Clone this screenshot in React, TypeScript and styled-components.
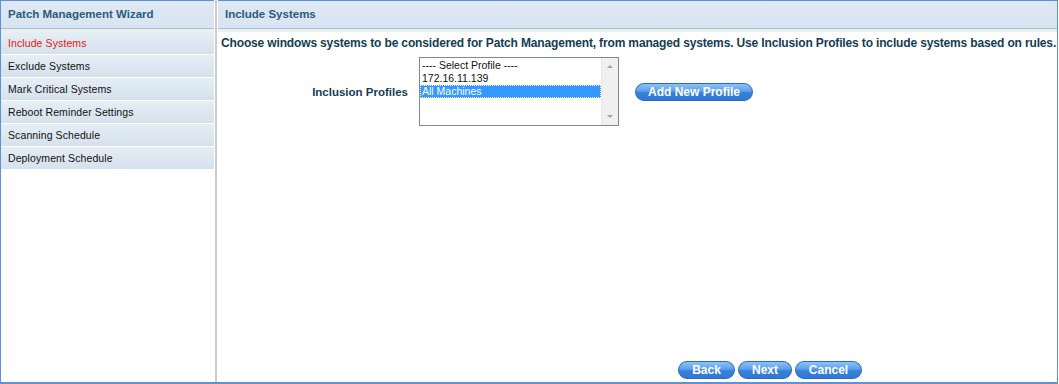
import styled, { createGlobalStyle } from 'styled-components';

const GlobalStyle = createGlobalStyle`
  html, body {
    margin: 0;
    padding: 0;
    background: #ffffff;
  }
  body {
    font-family: "Liberation Sans", Arial, sans-serif;
  }
`;

const steps = [
  'Include Systems',
  'Exclude Systems',
  'Mark Critical Systems',
  'Reboot Reminder Settings',
  'Scanning Schedule',
  'Deployment Schedule',
];

const profiles = ['---- Select Profile ----', '172.16.11.139', 'All Machines'];

export default function App() {
  return (
    <>
      <GlobalStyle />
      <Frame>
        <Sidebar>
          <PanelHeader>Patch Management Wizard</PanelHeader>
          <Band />
          <NavList>
            {steps.map((step) => (
              <NavItem key={step} $active={step === 'Include Systems'}>
                {step}
              </NavItem>
            ))}
          </NavList>
        </Sidebar>
        <Divider />
        <Main>
          <PanelHeader>Include Systems</PanelHeader>
          <Band />
          <Content>
            <Description>
              Choose windows systems to be considered for Patch Management, from managed systems. Use
              Inclusion Profiles to include systems based on rules.
            </Description>
            <FormRow>
              <Label>Inclusion Profiles</Label>
              <ListBox>
                <Options>
                  {profiles.map((p) => (
                    <Option key={p} $selected={p === 'All Machines'}>
                      {p}
                    </Option>
                  ))}
                </Options>
                <ScrollTrack>
                  <Arrow $dir="up" />
                  <Arrow $dir="down" />
                </ScrollTrack>
              </ListBox>
              <PillButton $width={118}>Add New Profile</PillButton>
            </FormRow>
          </Content>
          <Footer>
            <PillButton $width={57}>Back</PillButton>
            <PillButton $width={54}>Next</PillButton>
            <PillButton $width={67}>Cancel</PillButton>
          </Footer>
        </Main>
      </Frame>
    </>
  );
}

const Frame = styled.div`
  display: flex;
  width: 1058px;
  height: 384px;
  box-sizing: border-box;
  border-left: 1px solid #5b93d8;
  border-right: 1px solid #5b93d8;
  border-bottom: 2px solid #5b93d8;
`;

const Sidebar = styled.div`
  width: 213px;
  flex: none;
  display: flex;
  flex-direction: column;
`;

const Divider = styled.div`
  width: 2px;
  margin: 0 1px;
  flex: none;
  background: #cccccc;
`;

const Main = styled.div`
  flex: 1;
  display: flex;
  flex-direction: column;
  min-width: 0;
`;

const PanelHeader = styled.div`
  height: 27px;
  border-top: 1px solid #5b93d8;
  border-bottom: 1px solid #a3bfe2;
  background: linear-gradient(#dfe8f4, #d9e4f2);
  padding-left: 7px;
  font-size: 11.5px;
  font-weight: bold;
  line-height: 27px;
  color: #2c5a7a;
`;

const Band = styled.div`
  height: 3px;
  background: #efefe9;
`;

const NavList = styled.div`
  display: flex;
  flex-direction: column;
  gap: 1px;
`;

const NavItem = styled.div<{ $active?: boolean }>`
  height: 22px;
  line-height: 22px;
  padding-left: 7px;
  font-size: 10.5px;
  letter-spacing: 0.1px;
  background: linear-gradient(#e6eef5, #d4e1ec);
  color: ${(p) => (p.$active ? '#e8150f' : '#111111')};
`;

const Content = styled.div`
  padding: 4px 0 0 3px;
`;

const Description = styled.div`
  font-size: 12px;
  font-weight: bold;
  line-height: 14px;
  color: #123d55;
  white-space: nowrap;
  letter-spacing: -0.15px;
`;

const FormRow = styled.div`
  display: flex;
  align-items: center;
  margin-top: 7px;
`;

const Label = styled.div`
  width: 187px;
  text-align: right;
  font-size: 11.5px;
  font-weight: bold;
  color: #123d55;
  margin-right: 11px;
`;

const ListBox = styled.div`
  display: flex;
  width: 200px;
  height: 69px;
  box-sizing: border-box;
  border: 1px solid #828790;
  background: #ffffff;
  margin-right: 16px;
`;

const Options = styled.div`
  flex: 1;
  padding-top: 1px;
`;

const Option = styled.div<{ $selected?: boolean }>`
  height: 13px;
  line-height: 13px;
  padding-left: 2px;
  font-size: 10.5px;
  box-sizing: border-box;
  color: ${(p) => (p.$selected ? '#ffffff' : '#111111')};
  background: ${(p) => (p.$selected ? '#3399ff' : 'transparent')};
  outline: ${(p) => (p.$selected ? '1px dotted #ffffff' : 'none')};
  outline-offset: -1px;
`;

const ScrollTrack = styled.div`
  width: 17px;
  display: flex;
  flex-direction: column;
  justify-content: space-between;
  align-items: center;
  padding: 7px 0 7px;
  box-sizing: border-box;
  background: #f0f0f0;
  border-left: 1px solid #e6e6e6;
`;

const Arrow = styled.div<{ $dir: 'up' | 'down' }>`
  width: 0;
  height: 0;
  border-left: 3px solid transparent;
  border-right: 3px solid transparent;
  ${(p) =>
    p.$dir === 'up' ? 'border-bottom: 3px solid #a3a3a3;' : 'border-top: 3px solid #a3a3a3;'}
`;

const PillButton = styled.div<{ $width: number }>`
  width: ${(p) => p.$width}px;
  height: 18px;
  box-sizing: border-box;
  border: 1px solid #2b67bd;
  border-radius: 9px;
  background: linear-gradient(#8ec3f6 0%, #5a9fea 45%, #3781dc 55%, #2f78d6 100%);
  color: #ffffff;
  font-size: 12px;
  font-weight: bold;
  line-height: 16px;
  text-align: center;
  flex: none;
`;

const Footer = styled.div`
  display: flex;
  gap: 3px;
  margin-top: auto;
  padding-left: 460px;
  padding-bottom: 3px;
`;
